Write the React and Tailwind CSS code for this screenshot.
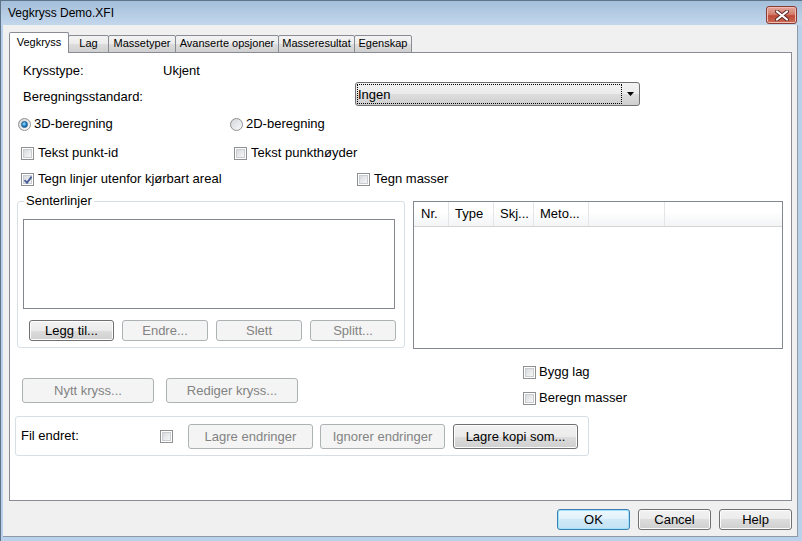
import clsx from "clsx";

const FONT = "font-['Liberation_Sans',Arial,sans-serif]";

function Btn({ children, disabled, def, className }) {
  return (
    <div
      className={clsx(
        "flex items-center justify-center rounded-[3px] border text-[13px] leading-none",
        disabled
          ? "border-[#adb2b5] bg-[#f4f4f4] text-[#838383]"
          : def
          ? "border-[#3c7fb1] bg-[linear-gradient(#eef8fd,#e0f1fb_50%,#cfe9f8_50%,#c2e2f4)] text-black shadow-[inset_0_0_0_1px_#9ee2fb]"
          : "border-[#707070] bg-[linear-gradient(#f2f2f2,#ebebeb_50%,#dddddd_50%,#cfcfcf)] text-black shadow-[inset_0_0_0_1px_#fcfcfc]",
        className
      )}
    >
      {children}
    </div>
  );
}

function Check({ checked }) {
  return (
    <span className="relative block w-[13px] h-[13px] shrink-0 border border-[#8e8f8f] bg-white p-[1px]">
      <span className="block w-full h-full border border-[#c9ccd1] bg-[linear-gradient(135deg,#d8dadd,#f7f7f7)]" />
      {checked && (
        <svg className="absolute left-[1px] top-[1px]" width="10" height="10" viewBox="0 0 10 10">
          <path d="M1.5 5.2 L4 7.8 L8.6 1.6" fill="none" stroke="#4a5f97" strokeWidth="1.9" />
        </svg>
      )}
    </span>
  );
}

function Radio({ checked }) {
  return (
    <span className="flex items-center justify-center w-[13px] h-[13px] shrink-0 rounded-full border border-[#8e8f8f] bg-[linear-gradient(135deg,#d2d4d8,#fbfbfb)]">
      {checked && (
        <span className="block w-[7px] h-[7px] rounded-full bg-[radial-gradient(circle_at_40%_35%,#9fe0ff,#1b7fc4_55%,#0b4a86)] border border-[#1a5b8f]" />
      )}
    </span>
  );
}

function Tab({ label, active, w, first }) {
  return (
    <div
      style={{ width: w }}
      className={clsx(
        "flex items-center justify-center text-[11px] border border-[#898c95] rounded-t-[2px]",
        !first && "-ml-px",
        active
          ? "h-[21px] bg-white border-b-0 relative z-10 pb-[1px]"
          : "h-[18px] bg-[linear-gradient(#f3f3f3,#ebebeb_50%,#dddddd_50%,#cfcfcf)] pb-[1px]"
      )}
    >
      {label}
    </div>
  );
}

export default function App() {
  return (
    <div className={clsx("w-[802px] h-[541px] overflow-hidden flex flex-col bg-[#b9d1ea] border-t border-l border-[#5f7388] text-black", FONT)}>
      {/* Tittellinje */}
      <div className="h-[24px] shrink-0 flex items-center justify-between pl-[7px] pr-[5px] bg-[linear-gradient(#a4bfda,#c3d7ec)]">
        <span className="text-[12px] text-black">Vegkryss Demo.XFI</span>
        <div className="w-[31px] h-[18px] mt-[4px] rounded-[3px] border border-[#8a3a32] bg-[linear-gradient(#e4a79c,#d37f6f_45%,#bf4a36_55%,#c86b55)] flex items-center justify-center shadow-[inset_0_0_0_1px_#eebdb4]">
          <svg width="14" height="11" viewBox="0 0 14 11">
            <path d="M2 1.5 L12 9.5 M12 1.5 L2 9.5" stroke="#5a2a24" strokeWidth="4" strokeLinecap="round" />
            <path d="M2 1.5 L12 9.5 M12 1.5 L2 9.5" stroke="#ffffff" strokeWidth="2.2" strokeLinecap="round" />
          </svg>
        </div>
      </div>

      {/* Innhold */}
      <div className="flex-1 flex flex-col ml-[2px] mr-[4px] mb-[4px] bg-[#f0f0f0] border-r border-b border-[#8d99a6] pt-[7px] pl-[6px] pr-[4px]">
        <div className="flex items-end h-[21px] -mb-px relative z-10">
          <Tab label="Vegkryss" active w={60} first />
          <Tab label="Lag" w={41} />
          <Tab label="Massetyper" w={68} />
          <Tab label="Avanserte opsjoner" w={104} />
          <Tab label="Masseresultat" w={77} />
          <Tab label="Egenskap" w={58} />
        </div>

        <div className="w-[783px] h-[449px] border border-[#898c95] bg-white flex flex-col text-[13px]">
          <div className="flex items-center h-[18px] mt-[9px] pl-[13px]">
            <span className="w-[140px]">Krysstype:</span>
            <span>Ukjent</span>
          </div>

          <div className="flex items-start h-[26px] pl-[13px]">
            <span className="w-[332px] mt-[9px] leading-[16px]">Beregningsstandard:</span>
            <div className="w-[285px] h-[24px] mt-[2px] rounded-[3px] border border-[#707070] bg-[linear-gradient(#f2f2f2,#ebebeb_50%,#dddddd_50%,#cfcfcf)] flex items-center pl-[1px] pr-[4px]">
              <div className="w-[265px] h-[20px] border border-dotted border-black flex items-center pt-[2px]">Ingen</div>
              <svg className="ml-auto mr-[1px]" width="7" height="4" viewBox="0 0 7 4">
                <path d="M0 0 H7 L3.5 4 Z" fill="#000" />
              </svg>
            </div>
          </div>

          <div className="flex items-center h-[18px] mt-[9px] pl-[8px]">
            <div className="w-[212px] flex items-center">
              <Radio checked />
              <span className="ml-[3px]">3D-beregning</span>
            </div>
            <Radio />
            <span className="ml-[3px]">2D-beregning</span>
          </div>

          <div className="flex items-center h-[18px] mt-[11px] pl-[11px]">
            <div className="w-[213px] flex items-center">
              <Check />
              <span className="ml-[4px]">Tekst punkt-id</span>
            </div>
            <Check />
            <span className="ml-[4px]">Tekst punkthøyder</span>
          </div>

          <div className="flex items-center h-[18px] mt-[8px] pl-[11px]">
            <div className="w-[336px] flex items-center">
              <Check checked />
              <span className="ml-[4px]">Tegn linjer utenfor kjørbart areal</span>
            </div>
            <Check />
            <span className="ml-[4px]">Tegn masser</span>
          </div>

          <div className="flex items-start mt-[5px] pl-[7px]">
            <fieldset className="w-[388px] h-[155px] border border-[#d5dfe5] rounded-[3px]">
              <legend className="ml-[6px] px-[2px] leading-[16px]">Senterlinjer</legend>
              <div className="ml-[5px] mt-[10px] w-[372px] h-[90px] border border-[#828790] bg-white" />
              <div className="flex items-center gap-[8px] ml-[11px] mt-[11px]">
                <Btn className="w-[85px] h-[21px]">Legg til...</Btn>
                <Btn disabled className="w-[86px] h-[21px]">Endre...</Btn>
                <Btn disabled className="w-[86px] h-[21px]">Slett</Btn>
                <Btn disabled className="w-[86px] h-[21px]">Splitt...</Btn>
              </div>
            </fieldset>

            <div className="ml-[8px] mt-[8px] w-[370px] h-[148px] border border-[#828790] bg-white">
              <div className="flex h-[25px] border-b border-[#d5d5d5] bg-[linear-gradient(#ffffff,#ffffff_40%,#f3f4f6)]">
                <div className="w-[35px] pl-[7px] flex items-center border-r border-[#e3e5e9]">Nr.</div>
                <div className="w-[45px] pl-[6px] flex items-center border-r border-[#e3e5e9]">Type</div>
                <div className="w-[40px] pl-[6px] flex items-center border-r border-[#e3e5e9]">Skj...</div>
                <div className="w-[55px] pl-[6px] flex items-center border-r border-[#e3e5e9]">Meto...</div>
                <div className="w-[76px] border-r border-[#e3e5e9]" />
              </div>
            </div>
          </div>

          <div className="flex items-start">
            <div className="w-[513px] pl-[12px] mt-[29px] flex gap-[12px]">
              <Btn disabled className="w-[132px] h-[25px]">Nytt kryss...</Btn>
              <Btn disabled className="w-[132px] h-[25px]">Rediger kryss...</Btn>
            </div>
            <div className="mt-[15px] flex flex-col gap-[10px]">
              <div className="flex items-center h-[16px]">
                <Check />
                <span className="ml-[3px]">Bygg lag</span>
              </div>
              <div className="flex items-center h-[16px]">
                <Check />
                <span className="ml-[3px]">Beregn masser</span>
              </div>
            </div>
          </div>

          <div className="ml-[5px] mt-[10px] w-[574px] h-[40px] border border-[#d5dfe5] rounded-[3px] flex items-center pl-[5px]">
            <span className="w-[139px]">Fil endret:</span>
            <Check />
            <Btn disabled className="ml-[15px] w-[125px] h-[25px]">Lagre endringer</Btn>
            <Btn disabled className="ml-[7px] w-[125px] h-[25px]">Ignorer endringer</Btn>
            <Btn className="ml-[8px] w-[125px] h-[25px]">Lagre kopi som...</Btn>
          </div>
        </div>

        <div className="flex justify-end gap-[8px] mt-[8px] pr-[1px]">
          <Btn def className="w-[73px] h-[21px]">OK</Btn>
          <Btn className="w-[73px] h-[21px]">Cancel</Btn>
          <Btn className="w-[73px] h-[21px]">Help</Btn>
        </div>
      </div>
    </div>
  );
}
